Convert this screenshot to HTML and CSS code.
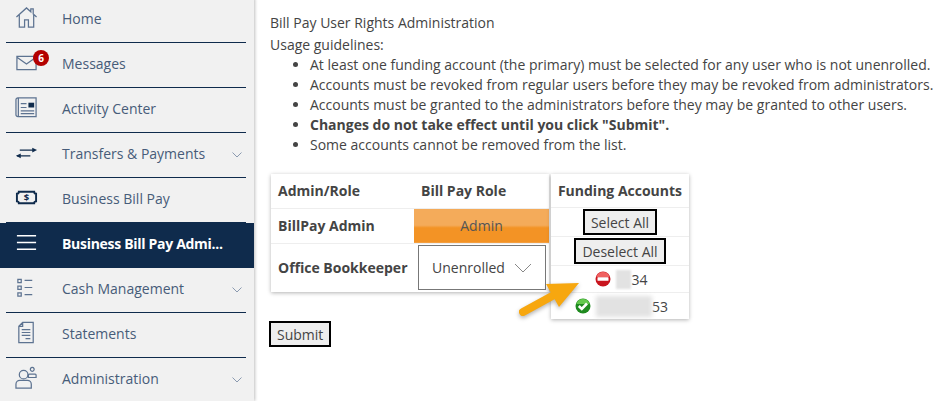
FILE: index.html
```html
<!DOCTYPE html>
<html lang="en">
<head>
    <meta charset="UTF-8">
    <title>Bill Pay User Rights Administration</title>
    <link rel="stylesheet" href="styles.css">
</head>
<body>
    <aside class="sidebar">
        <a class="nav-item">
            <svg class="nav-icon" viewBox="0 0 24 24"><path d="M1.500 11.500 12 2l4.500 4V3h2.500v5.300l3.500 3.200M4.500 9.500V22h5.500v-7.500h4V22h5.500V9.500"/></svg>
            <span class="nav-label">Home</span>
        </a>
        <a class="nav-item">
            <svg class="nav-icon" viewBox="0 0 24 24"><path d="M2 5.500h20v14H2zM2 6.500l10 7 10-7"/></svg>
            <span class="badge">6</span>
            <span class="nav-label">Messages</span>
        </a>
        <a class="nav-item">
            <svg class="nav-icon" viewBox="0 0 24 24"><path d="M1 4a2 2 0 0 1 2-2h19v19.500H3a2 2 0 0 1-2-2zM3.500 2v19.500M6 8h6M6 12h6M6 15.500h14M6 18.500h14"/><path class="fill" d="M14 7h6v5h-6z"/></svg>
            <span class="nav-label">Activity Center</span>
        </a>
        <a class="nav-item has-sub">
            <svg class="nav-icon dark" viewBox="0 0 24 24"><path d="M5 9.500h14M2 15.500h14"/><path class="fill" d="m18 7 5 2.500-5 2.500zM6 13l-5 2.500 5 2.500z"/></svg>
            <span class="nav-label">Transfers &amp; Payments</span>
            <svg class="chevron" viewBox="0 0 10 6"><path d="m.5.500 4.500 4.500 4.500-4.500"/></svg>
        </a>
        <a class="nav-item">
            <svg class="nav-icon dark thick" viewBox="0 0 24 24"><path d="M4 6h16c0 1.500 1 2 2 2v8c-1 0-2 .5-2 2H4c0-1.500-1-2-2-2V8c1 0 2-.5 2-2z"/><text x="12" y="15.500" text-anchor="middle">$</text></svg>
            <span class="nav-label">Business Bill Pay</span>
        </a>
        <a class="nav-item active">
            <svg class="nav-icon" viewBox="0 0 24 24"><path d="M2 5h20M2 12h20M2 19h20"/></svg>
            <span class="nav-label">Business Bill Pay Admi...</span>
        </a>
        <a class="nav-item has-sub">
            <svg class="nav-icon" viewBox="0 0 24 24"><path d="M3 3.500h3.500V7H3zM3 10.500h3.500V14H3zM3 17.500h3.500V21H3zM10 4.500h8M10 12h8M10 19.500h8"/></svg>
            <span class="nav-label">Cash Management</span>
            <svg class="chevron" viewBox="0 0 10 6"><path d="m.5.500 4.500 4.500 4.500-4.500"/></svg>
        </a>
        <a class="nav-item">
            <svg class="nav-icon" viewBox="0 0 24 24"><path d="M8 1.500h11v21H4V5.500zM4 5.500h4v-4M7 9h9M7 12h9M7 15h9M11 18.500h5"/></svg>
            <span class="nav-label">Statements</span>
        </a>
        <a class="nav-item has-sub">
            <svg class="nav-icon" viewBox="0 0 24 24"><circle cx="9" cy="9" r="4.500"/><path d="M1 23v-4a4 4 0 0 1 4-4h8a4 4 0 0 1 4 4v4zM18 5.500a2 2 0 1 1 .01 0M14 12V9.500a1 1 0 0 1 1-1h6a1 1 0 0 1 1 1V12z"/></svg>
            <span class="nav-label">Administration</span>
            <svg class="chevron" viewBox="0 0 10 6"><path d="m.5.500 4.500 4.500 4.500-4.500"/></svg>
        </a>
    </aside>

    <main class="content">
        <p class="page-title">Bill Pay User Rights Administration</p>
        <p class="guide-title">Usage guidelines:</p>
        <ul class="guide-list">
            <li>At least one funding account (the primary) must be selected for any user who is not unenrolled.</li>
            <li>Accounts must be revoked from regular users before they may be revoked from administrators.</li>
            <li>Accounts must be granted to the administrators before they may be granted to other users.</li>
            <li><strong>Changes do not take effect until you click "Submit".</strong></li>
            <li>Some accounts cannot be removed from the list.</li>
        </ul>

        <div class="panels">
            <div class="role-column">
                <table class="card role-table">
                    <tr class="head-row">
                        <th>Admin/Role</th>
                        <th>Bill Pay Role</th>
                    </tr>
                    <tr class="admin-row">
                        <th>BillPay Admin</th>
                        <td class="role-admin">Admin</td>
                    </tr>
                    <tr class="user-row">
                        <th>Office Bookkeeper</th>
                        <td>
                            <div class="role-select">
                                <span>Unenrolled</span>
                                <svg class="select-chevron" viewBox="0 0 18 10"><path d="m1 1 8 8 8-8"/></svg>
                            </div>
                        </td>
                    </tr>
                </table>
                <button class="btn submit-btn">Submit</button>
            </div>

            <div class="card funding">
                <div class="funding-head">Funding Accounts</div>
                <div class="funding-row btn-row"><button class="btn select-btn">Select All</button></div>
                <div class="funding-row btn-row"><button class="btn">Deselect All</button></div>
                <div class="funding-row account-row first-account">
                    <svg class="status-icon" viewBox="0 0 16 16">
                        <circle cx="8" cy="8" r="7.500" fill="#c9151e"/>
                        <path d="M8 1a7 7 0 0 1 6.600 5H1.400A7 7 0 0 1 8 1z" fill="#f06060"/>
                        <rect x="2.500" y="6.200" width="11" height="3.600" rx=".6" fill="#fff"/>
                    </svg>
                    <span class="masked short"></span><span>34</span>
                </div>
                <div class="funding-row account-row second-account">
                    <svg class="status-icon" viewBox="0 0 16 16">
                        <circle cx="8" cy="8" r="7.500" fill="#1f8a1f"/>
                        <path d="M8 1a7 7 0 0 1 6.600 5H1.400A7 7 0 0 1 8 1z" fill="#63c94d"/>
                        <path d="m3.800 8 3 3 5.200-5.500" fill="none" stroke="#fff" stroke-width="2.600"/>
                    </svg>
                    <span class="masked long"></span><span>53</span>
                </div>
            </div>
        </div>
    </main>

    <svg class="callout" viewBox="0 0 66 44">
        <path d="M7 32 38 15" stroke="#f7a70f" stroke-width="8" stroke-linecap="round" fill="none"/>
        <path d="M30 4 63 3 43 27z" fill="#f7a70f"/>
    </svg>
</body>
</html>
```

FILE: styles.css
```css
/* page */
* { box-sizing: border-box; }
html, body { height: 100%; }
body {
    margin: 0;
    display: flex;
    height: 401px;
    overflow: hidden;
    font-family: "Open Sans", "Liberation Sans", sans-serif;
    font-size: 14px;
    color: #444;
    background: #fff;
}

/* sidebar */
.sidebar {
    flex: 0 0 254px;
    margin-top: -2px;
    height: 403px;
    background: #f1f1f1;
    box-shadow: 1px 0 3px rgba(0,0,0,.25);
}
.nav-item {
    position: relative;
    display: flex;
    align-items: center;
    height: 45px;
    padding-left: 62px;
    color: #475c79;
    font-size: 14px;
}
.nav-item::after {
    content: '';
    position: absolute;
    left: 6px;
    right: 8px;
    bottom: 0;
    height: 1px;
    background: #0f2b4c;
}
.nav-item:last-child::after { display: none; }
.nav-item.active {
    background: #0f2b4c;
    color: #fff;
    font-weight: 700;
    letter-spacing: -.3px;
}
.nav-item.active::after { display: none; }
.nav-icon {
    position: absolute;
    left: 15px;
    top: 8px;
    width: 23px;
    height: 23px;
    fill: none;
    stroke: #5d7391;
    stroke-width: 1.300;
}
.nav-icon .fill { fill: #0f2b4c; stroke: none; }
.nav-icon.dark { stroke: #0f2b4c; }
.nav-icon.thick { stroke-width: 2; }
.nav-icon text {
    font-size: 10px;
    font-weight: 700;
    fill: #0f2b4c;
    stroke: none;
}
.active .nav-icon { stroke: #fff; stroke-width: 1.500; }
.nav-label { margin-top: -5px; }
.chevron {
    position: absolute;
    right: 12px;
    top: 19px;
    width: 10px;
    height: 6px;
    fill: none;
    stroke: #8b9ab0;
}
.badge {
    position: absolute;
    left: 33px;
    top: 7px;
    width: 16px;
    height: 16px;
    border-radius: 50%;
    background: #b30000;
    color: #fff;
    font-size: 10px;
    font-weight: 700;
    line-height: 16px;
    text-align: center;
}

/* main content */
.content {
    flex: 1;
    padding: 13px 0 0 16px;
}
.page-title { margin: 0 0 3px; line-height: 19px; }
.guide-title { margin: 0; line-height: 20px; }
.guide-list {
    margin: 0;
    padding-left: 40px;
}
.guide-list li { line-height: 20px; white-space: nowrap; }

.panels {
    display: flex;
    align-items: flex-start;
    gap: 2px;
    margin: 19px 0 0 1px;
}
.card {
    background: #fff;
    box-shadow: 0 1px 4px rgba(0,0,0,.3);
}
.role-column { width: 278px; }

/* role table */
.role-table {
    width: 278px;
    border-collapse: collapse;
}
.role-table th, .role-table td { padding: 0; font-weight: 400; }
.role-table th {
    padding-left: 7px;
    text-align: left;
    font-weight: 700;
}
.role-table tr { border-bottom: 1px solid #eee; }
.role-table tr:last-child { border-bottom: 0; }
.head-row { height: 34px; }
.head-row th:first-child { width: 143px; }
.admin-row { height: 35px; }
.user-row { height: 49px; }
.role-admin {
    text-align: center;
    color: #555;
    background: linear-gradient(#f4ab5a 50%, #f39325 56%);
}
.role-select {
    display: flex;
    align-items: center;
    justify-content: space-between;
    width: 128px;
    height: 45px;
    margin-left: 4px;
    padding: 0 13px;
    border: 1px solid #777;
}
.select-chevron {
    width: 18px;
    height: 10px;
    fill: none;
    stroke: #888;
}

/* buttons */
.btn {
    height: 26px;
    padding: 0 6px;
    border: 2px solid #000;
    border-radius: 0;
    background: #eee;
    color: #444;
    font: inherit;
}
.submit-btn {
    display: block;
    width: 62px;
    margin: 29px 0 0 -2px;
}

/* funding accounts */
.funding { width: 138px; }
.funding-head {
    height: 34px;
    line-height: 33px;
    font-weight: 700;
    text-align: center;
    border-bottom: 1px solid #eee;
}
.funding-row {
    display: flex;
    align-items: center;
    justify-content: center;
    border-bottom: 1px solid #eee;
}
.funding-row:last-child { border-bottom: 0; }
.btn-row { height: 29px; }
.account-row { height: 27px; padding-left: 3px; }
.second-account { height: 26px; }
.status-icon {
    width: 16px;
    height: 16px;
    flex: none;
    margin-right: 5px;
}
.masked {
    display: block;
    background: #e2e2e2;
    filter: blur(1px);
}
.masked.short { width: 15px; height: 19px; }
.masked.long { width: 56px; height: 21px; filter: blur(2px); }

/* arrow over the table */
.callout {
    position: absolute;
    left: 516px;
    top: 280px;
    width: 66px;
    height: 44px;
    filter: drop-shadow(0 2px 2px rgba(0,0,0,.3));
}
```
